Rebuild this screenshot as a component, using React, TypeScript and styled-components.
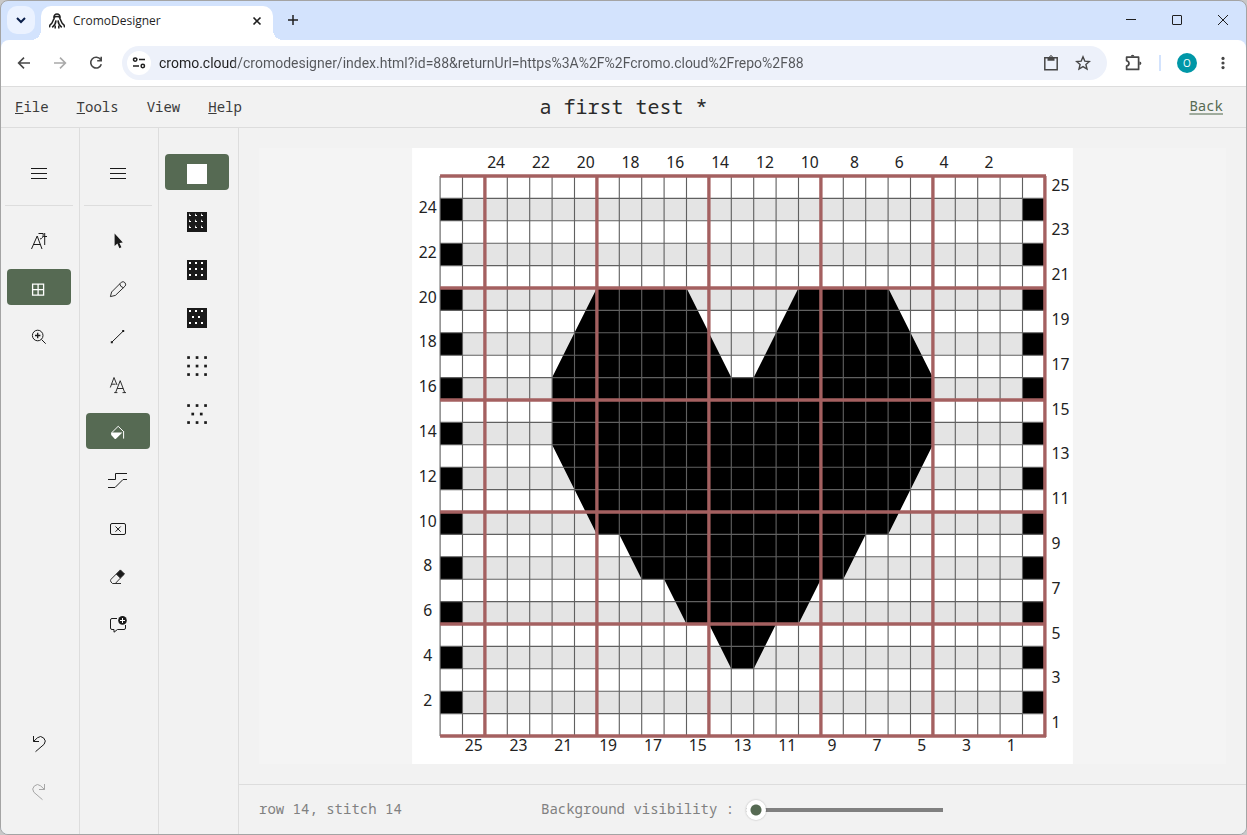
import React, { useState } from "react";
import styled, { createGlobalStyle, css } from "styled-components";

const UI = `"Open Sans", "Noto Sans", sans-serif`;
const MONO = `"Noto Sans Mono", "DejaVu Sans Mono", "Liberation Mono", monospace`;
const GREEN = "#566a53";
const INK = "#1a1a1a";
const LINE = "#dddddd";

const GlobalStyle = createGlobalStyle`
  *, *::before, *::after { box-sizing: border-box; }
  body { margin: 0; background: #c8c8c8; }
  button { border: 0; padding: 0; background: none; color: inherit; font: inherit; cursor: pointer; }
  svg { display: block; flex: none; }
`;

/* ---------- browser window ---------- */

const Window = styled.div`
  display: flex;
  flex-direction: column;
  height: 100vh;
  border: 1px solid #a4a4a4;
  border-radius: 8px;
  overflow: hidden;
  background: #d3e3fd;
  font-family: ${UI};
  color: #1f1f1f;
`;

const TabStrip = styled.div`
  display: flex;
  align-items: flex-start;
  height: 39px;
  flex: none;
`;

const TabSearch = styled.button`
  display: grid;
  place-items: center;
  width: 28px;
  height: 28px;
  margin: 5px 6px 0;
  border-radius: 10px;
  background: #ebf2ff;
`;

const Tab = styled.div`
  position: relative;
  display: flex;
  align-items: center;
  gap: 8px;
  width: 232px;
  height: 34px;
  margin-top: 5px;
  padding: 0 8px 4px;
  border-radius: 10px 10px 0 0;
  background: #ffffff;
  font-size: 12px;
  line-height: 16px;

  &::before,
  &::after {
    content: "";
    position: absolute;
    bottom: 0;
    width: 10px;
    height: 10px;
  }
  &::before {
    left: -10px;
    background: radial-gradient(circle at 0 0, transparent 10px, #ffffff 10px);
  }
  &::after {
    right: -10px;
    background: radial-gradient(circle at 100% 0, transparent 10px, #ffffff 10px);
  }
`;

const TabTitle = styled.span`
  flex: 1;
`;

const SmallButton = styled.button`
  display: grid;
  place-items: center;
  width: 16px;
  height: 16px;
`;

const NewTab = styled.button`
  display: grid;
  place-items: center;
  width: 28px;
  height: 28px;
  margin: 5px 0 0 6px;
`;

const WindowControls = styled.div`
  display: flex;
  margin-left: auto;
`;

const WindowControl = styled.button`
  display: grid;
  place-items: center;
  width: 46px;
  height: 38px;
`;

const Toolbar = styled.div`
  display: flex;
  align-items: center;
  height: 47px;
  flex: none;
  padding: 0 5px;
  border-bottom: 1px solid ${LINE};
  border-radius: 8px 8px 0 0;
  background: #ffffff;
`;

const ToolbarButton = styled.button<{ $muted?: boolean }>`
  display: grid;
  place-items: center;
  width: 36px;
  height: 34px;
  color: ${(p) => (p.$muted ? "#a9a9a9" : "#474747")};
`;

const AddressBar = styled.div`
  display: flex;
  align-items: center;
  flex: 1;
  height: 34px;
  margin: 0 8px;
  padding: 0 8px 0 5px;
  border-radius: 17px;
  background: #edf1fa;
`;

const SiteInfo = styled.button`
  display: grid;
  place-items: center;
  width: 24px;
  height: 24px;
  border-radius: 50%;
  background: #ffffff;
`;

const AddressInput = styled.input`
  flex: 1;
  min-width: 0;
  margin: 0 8px;
  padding: 0;
  border: 0;
  outline: 0;
  background: linear-gradient(90deg, #1f1f1f 76px, #54565a 76px);
  background-clip: text;
  -webkit-background-clip: text;
  -webkit-text-fill-color: transparent;
  font-family: Roboto, ${UI};
  font-size: 14px;
  line-height: 20px;
`;

const AddressAction = styled.button`
  display: grid;
  place-items: center;
  width: 32px;
  height: 28px;
  color: #474747;
`;

const Divider = styled.span`
  width: 2px;
  height: 16px;
  margin: 0 8px;
  background: #d3e3fd;
`;

const Avatar = styled.span`
  display: grid;
  place-items: center;
  width: 20px;
  height: 20px;
  border-radius: 50%;
  background: #0097a7;
  color: #ffffff;
  font-size: 10px;
  line-height: 20px;
`;

/* ---------- application ---------- */

const AppShell = styled.div`
  display: flex;
  flex-direction: column;
  flex: 1;
  min-height: 0;
  background: #f2f2f2;
  color: ${INK};
  font-family: ${MONO};
  font-size: 14px;
  line-height: 20px;
`;

const Header = styled.header`
  display: grid;
  grid-template-columns: 1fr auto 1fr;
  align-items: center;
  height: 41px;
  flex: none;
  border-bottom: 1px solid ${LINE};
`;

const MenuBar = styled.nav`
  display: flex;
`;

const MenuButton = styled.button`
  padding: 0 14px;
  color: #3a3a3a;
`;

const Title = styled.h1`
  margin: 0;
  color: #2a2a2a;
  font-size: 20px;
  font-weight: 400;
  line-height: 28px;
`;

const BackLink = styled.a`
  justify-self: end;
  margin-right: 23px;
  padding-bottom: 2px;
  color: ${GREEN};
  text-decoration-color: #9fab9d;
  text-decoration-thickness: 2px;
  text-underline-offset: 2px;
`;

const Body = styled.div`
  display: flex;
  flex: 1;
  min-height: 0;
`;

const Rail = styled.div<{ $wide?: boolean }>`
  display: flex;
  flex-direction: column;
  gap: 12px;
  width: ${(p) => (p.$wide ? 80 : 79)}px;
  flex: none;
  padding: 26px 6px 26px 4px;
  border-right: 1px solid ${LINE};
`;

const RailRule = styled.hr`
  width: 100%;
  margin: 3px 0;
  border: 0;
  border-top: 1px solid ${LINE};
`;

const RailSpacer = styled.span`
  flex: 1;
`;

const ToolButton = styled.button<{ $active?: boolean; $faint?: boolean }>`
  display: grid;
  place-items: center;
  width: 64px;
  height: 36px;
  flex: none;
  margin-left: 2px;
  padding-top: 4px;
  border-radius: 4px;
  color: ${(p) => (p.$faint ? "#a6a6a6" : INK)};
  ${(p) =>
    p.$active &&
    css`
      background: ${GREEN};
      color: #ffffff;
    `}
`;

const Workspace = styled.main`
  display: flex;
  flex-direction: column;
  flex: 1;
  min-width: 0;
`;

const Canvas = styled.div`
  display: flex;
  flex: 1;
  min-height: 0;
  margin: 20px;
  background: #f4f4f4;

  svg {
    width: 100%;
    height: 100%;
  }
`;

const StatusBar = styled.footer`
  display: flex;
  align-items: center;
  height: 50px;
  flex: none;
  gap: 138px;
  padding: 0 20px;
  border-top: 1px solid ${LINE};
  color: #808080;
`;

const Position = styled.span`
  width: 144px;
  padding-bottom: 2px;
  white-space: nowrap;
`;

const SliderLabel = styled.label`
  display: flex;
  align-items: center;
  gap: 12px;
  white-space: nowrap;
`;

const SliderText = styled.span`
  padding-bottom: 2px;
`;

const Slider = styled.input`
  appearance: none;
  width: 197px;
  height: 20px;
  margin: 0;
  background: linear-gradient(#808080, #808080) center / 100% 4px no-repeat;
  border-radius: 2px;

  &::-webkit-slider-thumb {
    appearance: none;
    width: 20px;
    height: 20px;
    border-radius: 50%;
    background: radial-gradient(circle, ${GREEN} 5px, #ffffff 6px);
    box-shadow: 0 0 2px rgba(0, 0, 0, 0.3);
  }
`;

/* ---------- icons ---------- */

type IconProps = { size?: number; width?: number; children: React.ReactNode };

const Icon = ({ size = 24, width = 1, children }: IconProps) => (
  <svg
    width={size}
    height={size}
    viewBox={`0 0 ${size} ${size}`}
    fill="none"
    stroke="currentColor"
    strokeWidth={width}
    aria-hidden="true"
  >
    {children}
  </svg>
);

const MenuIcon = () => (
  <Icon>
    <path d="M4 6.5H20M4 11.5H20M4 16.5H20" />
  </Icon>
);

const PatternIcon = ({ dark, dots, r }: { dark?: boolean; dots: number[][]; r: number }) => (
  <Icon size={20}>
    {dark && <rect width="20" height="20" fill={INK} stroke="none" />}
    {dots.map(([x, y]) => (
      <rect key={`${x}-${y}`} x={x} y={y} width={r} height={r} fill={dark ? "#fff" : INK} stroke="none" />
    ))}
  </Icon>
);

const product = (a: number[]) => a.flatMap((y) => a.map((x) => [x, y]));

const viewTools = [
  {
    name: "Text direction",
    icon: (
      <Icon>
        <path d="M4.5 20L10.2 7L15 20M6.3 15.5H13.4M11.5 4.5H16.2Q16.5 9.5 13 10M17.7 4V16M16.2 7.5H20" />
      </Icon>
    ),
  },
  {
    name: "Grid",
    active: true,
    icon: (
      <Icon>
        <path strokeWidth="1.3" d="M5.6 7.1H16.6V18.1H5.6ZM11.1 7.1V18.1M5.6 12.6H16.6" />
      </Icon>
    ),
  },
  {
    name: "Zoom in",
    icon: (
      <Icon>
        <circle cx="10.7" cy="10.5" r="5.3" />
        <path d="M14.5 14.5L18.7 18.7" />
        <path strokeWidth="1.3" d="M8 10.5H13.4M10.7 7.8V13.2" />
      </Icon>
    ),
  },
];

const drawTools = [
  {
    name: "Select",
    icon: (
      <Icon>
        <path
          fill="currentColor"
          stroke="none"
          d="M8.6 4.6V17L11.4 14.6L13.4 19.2L15.4 18.3L13.4 13.9L16.8 13.5Z"
        />
      </Icon>
    ),
  },
  {
    name: "Pencil",
    icon: (
      <Icon width={0.9}>
        <path d="M4.4 19.6L5.6 15L15.5 5.1A2.8 2.8 0 0 1 19.3 8.9L9.4 18.4ZM13.7 6.8Q14.2 10 17.4 10.7" />
      </Icon>
    ),
  },
  {
    name: "Line",
    icon: (
      <Icon>
        <path d="M5.7 17.3L17.3 6" />
        <path fill="currentColor" stroke="none" d="M4.8 16.2h2v2h-2zM16.2 5h2v2h-2z" />
      </Icon>
    ),
  },
  {
    name: "Text",
    icon: (
      <Icon width={0.9}>
        <path d="M4.3 14.5L8 4.5L11 12M5.6 11.2H9.6M9.6 19.5L14.2 7.7L18.7 19.5M11.2 15.5H17.2M8.2 19.6H11.4M16.5 19.6H20" />
      </Icon>
    ),
  },
  {
    name: "Fill",
    active: true,
    icon: (
      <Icon>
        <path d="M5.6 11.8L12.2 5.3L17.2 10.2" />
        <path fill="currentColor" stroke="none" d="M5 11.4H16.4L10 17.7Q9.3 18.3 8.6 17.7L5.2 14Z" />
        <path d="M17.6 10V17.6" />
      </Icon>
    ),
  },
  {
    name: "Steps",
    icon: (
      <Icon>
        <path d="M2 10.5H9.5V4.5H21M2 18.5H9L17 10.5H21" />
      </Icon>
    ),
  },
  {
    name: "Clear",
    icon: (
      <Icon>
        <rect x="4.5" y="6.5" width="15" height="11" rx="1.5" />
        <path d="M9.5 9.5L14.7 14.7M14.7 9.5L9.5 14.7" />
      </Icon>
    ),
  },
  {
    name: "Eraser",
    icon: (
      <Icon width={0.9}>
        <path fill="currentColor" d="M14.4 4.9L18.5 9L14.4 13.1L10.3 9Z" />
        <path d="M10.3 9L5 14.3Q4 15.6 5 17L6.5 18.5H15M14.4 13.1L9.5 18.3" />
      </Icon>
    ),
  },
  {
    name: "Add comment",
    icon: (
      <Icon>
        <path d="M11 5.5H6Q4.5 5.5 4.5 7V15Q4.5 16.5 6 16.5H8V19.2L11.5 16.5H18Q19.5 16.5 19.5 15V12" />
        <circle cx="16.5" cy="7.4" r="4.3" fill="currentColor" stroke="none" />
        <path stroke="#fff" d="M14 7.5H19M16.5 5V10" />
      </Icon>
    ),
  },
];

const threeRows = (outer: number[], inner: number[], rows: number[]) => [
  ...outer.map((x) => [x, rows[0]]),
  ...inner.map((x) => [x, rows[1]]),
  ...outer.map((x) => [x, rows[2]]),
];

const patterns = [
  {
    name: "Solid",
    active: true,
    icon: (
      <Icon size={20}>
        <rect width="20" height="20" fill="#fff" stroke="none" />
      </Icon>
    ),
  },
  {
    name: "Slanted knit dots",
    icon: (
      <Icon size={20}>
        <rect width="20" height="20" fill={INK} stroke="none" />
        {product([2, 8, 14]).map(([x, y]) => (
          <path key={`${x}-${y}`} d={`M${x} ${y - 1}V${y + 2}H${x + 2}V${y + 1}H${x + 1}Z`} fill="#fff" stroke="none" />
        ))}
      </Icon>
    ),
  },
  { name: "Square dots on dark", icon: <PatternIcon dark r={2} dots={product([2, 8, 14])} /> },
  { name: "Staggered dots on dark", icon: <PatternIcon dark r={2} dots={threeRows([2, 8, 14], [5, 11], [2, 8, 14])} /> },
  { name: "Square dots", icon: <PatternIcon r={2.7} dots={product([0.2, 8.7, 17.2])} /> },
  { name: "Staggered dots", icon: <PatternIcon r={2.7} dots={threeRows([0.2, 8.7, 17.2], [4.4, 12.9], [0.2, 8.7, 17.2])} /> },
];

/* ---------- knitting chart ---------- */

const COLS = 27;
const ROWS = 25;
const CELL = 20;
const PAD = 25;
const W = COLS * CELL;
const H = ROWS * CELL;

const HEART = [
  [7, 5], [11, 5], [13, 9], [14, 9], [16, 5], [20, 5], [22, 9], [22, 12], [20, 16], [19, 16],
  [18, 18], [17, 18], [16, 20], [15, 20], [14, 22], [13, 22], [12, 20], [11, 20], [10, 18],
  [9, 18], [8, 16], [7, 16], [5, 12], [5, 9],
];

const range = (n: number) => Array.from({ length: n }, (_, i) => i);

const ChartText = styled.text`
  font-family: "Noto Sans", "Open Sans", sans-serif;
  font-size: 14px;
  fill: #222222;
`;

const Chart = () => (
  <svg viewBox={`0 0 ${W + 2 * PAD} ${H + 2 * PAD}`} role="img" aria-label="Heart knitting chart">
    <rect width={W + 2 * PAD} height={H + 2 * PAD} fill="#fff" />
    <g transform={`translate(${PAD} ${PAD})`}>
      {range(ROWS).filter((r) => r % 2 === 1).map((r) => (
        <g key={r}>
          <rect x={CELL} y={r * CELL} width={W - 2 * CELL} height={CELL} fill="#e4e4e4" />
          <rect y={r * CELL} width={CELL} height={CELL} />
          <rect x={W - CELL} y={r * CELL} width={CELL} height={CELL} />
        </g>
      ))}
      <polygon points={HEART.map(([x, y]) => `${x * CELL},${y * CELL}`).join(" ")} />
      <g stroke="#606060">
        {range(COLS + 1).map((c) => (
          <line key={`c${c}`} x1={c * CELL} x2={c * CELL} y1={0} y2={H} />
        ))}
        {range(ROWS + 1).map((r) => (
          <line key={`r${r}`} x1={0} x2={W} y1={r * CELL} y2={r * CELL} />
        ))}
      </g>
      <g stroke="#a46060" strokeWidth={3}>
        {range(6).map((i) => (
          <g key={i}>
            <line x1={(2 + i * 5) * CELL} x2={(2 + i * 5) * CELL} y1={0} y2={H + 1} />
            <line x1={0} x2={W + 1} y1={i * 5 * CELL} y2={i * 5 * CELL} />
          </g>
        ))}
      </g>
      {range(25).map((i) => {
        const n = i + 1;
        const even = n % 2 === 0;
        return (
          <g key={n}>
            <ChartText x={(26 - n + 0.5) * CELL} y={even ? -7 : H + 13} textAnchor="middle">{n}</ChartText>
            <ChartText
              x={even ? -11 : W + 6}
              y={(25 - n + 0.5) * CELL + 3}
              textAnchor={even ? "middle" : "start"}
            >
              {n}
            </ChartText>
          </g>
        );
      })}
    </g>
  </svg>
);

const menus = [
  { name: "File", underline: true },
  { name: "Tools", underline: true },
  { name: "View", underline: false },
  { name: "Help", underline: true },
];

export default function App() {
  const [visibility, setVisibility] = useState(0);
  return (
    <Window>
      <GlobalStyle />
      <TabStrip>
        <TabSearch aria-label="Search tabs">
          <Icon size={12} width={2}><path d="M2 4L6 8L10 4" stroke="#0b1f4b" /></Icon>
        </TabSearch>
        <Tab>
          <Icon size={16} width={1.5}>
            <path d="M4.9 5C4.4 -.4 11.6 -.4 11.1 5M4.6 4.6Q8 2.6 11.4 4.6" />
            <path d="M5.6 5.2C3.4 7 4.4 9.6 1.4 11.6Q.4 12.8 .6 14.4M10.4 5.2C12.6 7 11.6 9.6 14.6 11.6Q15.6 12.8 15.4 14.4" />
            <path d="M7 7.4Q6.8 11.4 3.2 14.4M9 7.4Q9.2 11.4 12.8 14.4" />
            <path d="M6.2 12.6V15.6M9.8 12.6V15.6" />
          </Icon>
          <TabTitle>CromoDesigner</TabTitle>
          <SmallButton aria-label="Close tab">
            <Icon size={10} width={1.6}><path d="M1.5 1.5L8.5 8.5M8.5 1.5L1.5 8.5" /></Icon>
          </SmallButton>
        </Tab>
        <NewTab aria-label="New tab">
          <Icon size={12} width={1.5}><path d="M6 1V11M1 6H11" /></Icon>
        </NewTab>
        <WindowControls>
          <WindowControl aria-label="Minimize">
            <Icon size={10}><path d="M0 4.5H10" /></Icon>
          </WindowControl>
          <WindowControl aria-label="Maximize">
            <Icon size={10}><rect x="0.5" y="0.5" width="9" height="9" rx="0.5" /></Icon>
          </WindowControl>
          <WindowControl aria-label="Close window">
            <Icon size={10}><path d="M0 0L10 10M10 0L0 10" /></Icon>
          </WindowControl>
        </WindowControls>
      </TabStrip>

      <Toolbar>
        <ToolbarButton aria-label="Back">
          <Icon size={16} width={1.6}><path d="M14 8H3M8 2.6L2.6 8L8 13.4" /></Icon>
        </ToolbarButton>
        <ToolbarButton aria-label="Forward" $muted>
          <Icon size={16} width={1.6}><path d="M2 8H13M8 2.6L13.4 8L8 13.4" /></Icon>
        </ToolbarButton>
        <ToolbarButton aria-label="Reload">
          <Icon size={16} width={1.6}>
            <path d="M12.6 4.6A5.4 5.4 0 1 0 13.3 9.2M13.2 1.8V5.8H9.2" />
          </Icon>
        </ToolbarButton>
        <AddressBar>
          <SiteInfo aria-label="Site information">
            <Icon size={14} width={1.5}>
              <circle cx="3.2" cy="3.6" r="1.7" />
              <circle cx="10.8" cy="10" r="1.7" />
              <path d="M7 3.6H13M1 10H7" />
            </Icon>
          </SiteInfo>
          <AddressInput
            aria-label="Address"
            defaultValue="cromo.cloud/cromodesigner/index.html?id=88&returnUrl=https%3A%2F%2Fcromo.cloud%2Frepo%2F88"
          />
          <AddressAction aria-label="Clipboard">
            <Icon size={16} width={1.5}>
              <path d="M1.8 2.8H14.2V14.8H1.8Z" />
              <path d="M4.5 2.5H11.5V5.8H4.5Z" fill="currentColor" stroke="none" />
              <circle cx="8" cy="2" r="1.3" strokeWidth="1" />
            </Icon>
          </AddressAction>
          <AddressAction aria-label="Bookmark">
            <Icon size={16} width={1.4}>
              <path d="M8 1.8L9.8 6.1L14.4 6.5L10.9 9.5L12 14L8 11.6L4 14L5.1 9.5L1.6 6.5L6.2 6.1Z" />
            </Icon>
          </AddressAction>
        </AddressBar>
        <ToolbarButton aria-label="Extensions">
          <Icon size={18} width={1.7}>
            <path d="M2.6 3.2H14.6V15.4H2.6V12Q5 11.4 5 9.4Q5 7.4 2.6 6.8Z" strokeLinejoin="round" />
            <path d="M6.8 2.6Q6.8 .8 8.6 .8Q10.4 .8 10.4 2.6ZM15.4 7.4Q17.4 7.6 17.4 9.3Q17.4 11 15.4 11.2Z" fill="currentColor" stroke="none" />
          </Icon>
        </ToolbarButton>
        <Divider />
        <ToolbarButton aria-label="Profile"><Avatar>O</Avatar></ToolbarButton>
        <ToolbarButton aria-label="Browser menu">
          <Icon size={16}>
            <g fill="currentColor" stroke="none">
              <circle cx="8" cy="3.4" r="1.6" />
              <circle cx="8" cy="8" r="1.6" />
              <circle cx="8" cy="12.6" r="1.6" />
            </g>
          </Icon>
        </ToolbarButton>
      </Toolbar>

      <AppShell>
        <Header>
          <MenuBar>
            {menus.map((m) => (
              <MenuButton key={m.name}>
                {m.underline ? <><u>{m.name[0]}</u>{m.name.slice(1)}</> : m.name}
              </MenuButton>
            ))}
          </MenuBar>
          <Title>a first test *</Title>
          <BackLink href="#repo">Back</BackLink>
        </Header>
        <Body>
          <Rail>
            <ToolButton aria-label="View menu"><MenuIcon /></ToolButton>
            <RailRule />
            {viewTools.map((t) => (
              <ToolButton key={t.name} aria-label={t.name} $active={t.active}>{t.icon}</ToolButton>
            ))}
            <RailSpacer />
            <ToolButton aria-label="Undo">
              <Icon><path d="M6.5 4V9.5H12M6.5 9.5L10.4 5.8A4.7 4.7 0 0 1 17.2 12.2L8.5 19.7" /></Icon>
            </ToolButton>
            <ToolButton aria-label="Redo" $faint>
              <Icon><path d="M17.5 4V9.5H12M17.5 9.5L13.6 5.8A4.7 4.7 0 0 0 6.8 12.2L15.5 19.7" /></Icon>
            </ToolButton>
          </Rail>
          <Rail>
            <ToolButton aria-label="Draw menu"><MenuIcon /></ToolButton>
            <RailRule />
            {drawTools.map((t) => (
              <ToolButton key={t.name} aria-label={t.name} $active={t.active}>{t.icon}</ToolButton>
            ))}
          </Rail>
          <Rail $wide>
            {patterns.map((t) => (
              <ToolButton key={t.name} aria-label={t.name} $active={t.active}>{t.icon}</ToolButton>
            ))}
          </Rail>
          <Workspace>
            <Canvas><Chart /></Canvas>
            <StatusBar>
              <Position>row 14, stitch 14</Position>
              <SliderLabel>
                <SliderText>Background visibility :</SliderText>
                <Slider
                  type="range"
                  min={0}
                  max={100}
                  value={visibility}
                  onChange={(e) => setVisibility(Number(e.target.value))}
                />
              </SliderLabel>
            </StatusBar>
          </Workspace>
        </Body>
      </AppShell>
    </Window>
  );
}
